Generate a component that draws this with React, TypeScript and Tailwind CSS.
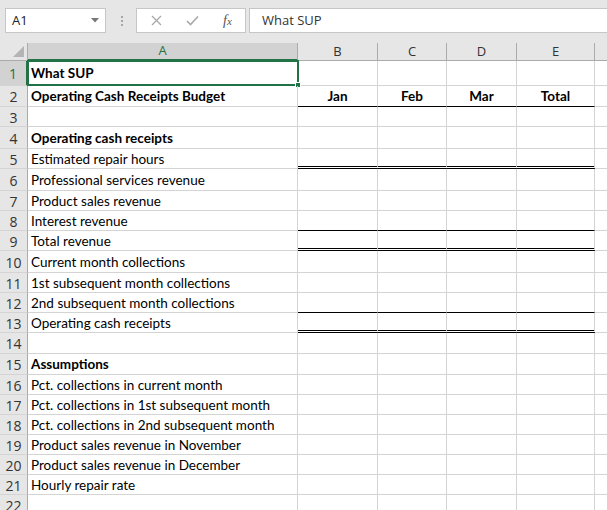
import React from 'react';

type Row = {
  h: number;
  a?: string;
  bold?: boolean;
  months?: boolean;
  line?: 'single' | 'double';
};

const rows: Row[] = [
  { h: 25, a: 'What SUP', bold: true },
  { h: 21, a: 'Operating Cash Receipts Budget', bold: true, months: true, line: 'single' },
  { h: 20 },
  { h: 22, a: 'Operating cash receipts', bold: true },
  { h: 20, a: 'Estimated repair hours', line: 'double' },
  { h: 22, a: 'Professional services revenue' },
  { h: 20, a: 'Product sales revenue' },
  { h: 20, a: 'Interest revenue', line: 'single' },
  { h: 20, a: 'Total revenue', line: 'double' },
  { h: 22, a: 'Current month collections' },
  { h: 20, a: '1st subsequent month collections' },
  { h: 20, a: '2nd subsequent month collections', line: 'single' },
  { h: 20, a: 'Operating cash receipts', line: 'double' },
  { h: 21 },
  { h: 21, a: 'Assumptions', bold: true },
  { h: 20, a: 'Pct. collections in current month' },
  { h: 20, a: 'Pct. collections in 1st subsequent month' },
  { h: 20, a: 'Pct. collections in 2nd subsequent month' },
  { h: 20, a: 'Product sales revenue in November' },
  { h: 20, a: 'Product sales revenue in December' },
  { h: 20, a: 'Hourly repair rate' },
  { h: 20 },
];

const months = ['Jan', 'Feb', 'Mar', 'Total'];
const cols = ['B', 'C', 'D', 'E'];
const cellFont = { fontFamily: '"Comic Sans MS", Lato, "Noto Sans", sans-serif' };
const uiFont = { fontFamily: '"Open Sans", "Liberation Sans", sans-serif' };

function colWidth(i: number) {
  return i === 0 ? 'w-[80px]' : i === 1 ? 'w-[69px]' : i === 2 ? 'w-[70px]' : 'w-[78px]';
}

function Toolbar() {
  return (
    <div className="flex h-[43px] items-start bg-[#e6e6e6] pt-[8px] pl-[5px]" style={uiFont}>
      <div className="flex h-[25px] w-[101px] items-center justify-between border border-[#c6c6c6] bg-white pl-[6px] pr-[6px] text-[13px] text-[#222]">
        <span>A1</span>
        <svg width="8" height="5" viewBox="0 0 8 5">
          <path d="M0 0 L8 0 L4 4.5 Z" fill="#777" />
        </svg>
      </div>
      <div className="ml-[15px] mr-[13px] flex h-[25px] flex-col justify-center gap-[2px]">
        <span className="h-[2px] w-[2px] bg-[#a6a6a6]" />
        <span className="h-[2px] w-[2px] bg-[#a6a6a6]" />
        <span className="h-[2px] w-[2px] bg-[#a6a6a6]" />
      </div>
      <div className="flex h-[25px] w-[110px] items-center border border-[#c6c6c6] bg-white">
        <svg className="ml-[14px]" width="11" height="11" viewBox="0 0 11 11">
          <path d="M1 1 L10 10 M10 1 L1 10" stroke="#a8a8a8" strokeWidth="1.3" />
        </svg>
        <svg className="ml-[24px]" width="13" height="11" viewBox="0 0 13 11">
          <path d="M1 6 L4.5 9.5 L12 1.5" stroke="#a8a8a8" strokeWidth="1.6" fill="none" />
        </svg>
        <span
          className="ml-[24px] text-[14px] italic text-[#555]"
          style={{ fontFamily: '"Liberation Serif", serif' }}
        >
          f<span className="text-[11px]">x</span>
        </span>
      </div>
      <div className="ml-[3px] flex h-[25px] flex-1 items-center border border-r-0 border-[#c6c6c6] bg-white pl-[12px] text-[13px] text-[#333]">
        What SUP
      </div>
    </div>
  );
}

function HeaderRow() {
  return (
    <div className="flex h-[18px] bg-[#e6e6e6] text-[13px] text-[#333]" style={uiFont}>
      <div className="relative w-[28px] shrink-0 border-r border-b border-[#ababab]">
        <svg className="absolute right-[3px] bottom-[3px]" width="11" height="11" viewBox="0 0 11 11">
          <path d="M11 0 L11 11 L0 11 Z" fill="#b4b4b4" />
        </svg>
      </div>
      <div className="flex w-[270px] shrink-0 items-center justify-center border-r border-[#ababab] border-b-2 border-b-[#217346] bg-[#d2d2d2] text-[#217346]">
        A
      </div>
      {cols.map((c, i) => (
        <div
          key={c}
          className={`flex shrink-0 items-center justify-center border-r border-b border-[#ababab] ${colWidth(i)}`}
        >
          {c}
        </div>
      ))}
      <div className="flex-1 border-b border-[#ababab]" />
    </div>
  );
}

function lineClass(line?: 'single' | 'double') {
  if (line === 'double') return 'border-b-[3px] border-b-black border-double';
  if (line === 'single') return 'border-b border-b-black';
  return 'border-b border-b-[#d4d4d4]';
}

function GridRow({ row, n }: { row: Row; n: number }) {
  const selected = n === 1;
  return (
    <div className="flex" style={{ height: row.h }}>
      <div
        className={`flex w-[28px] shrink-0 items-center justify-center border-b border-b-[#d4d4d4] pt-[1px] text-[14px] ${
          selected
            ? 'border-r-2 border-r-[#217346] bg-[#d2d2d2] text-[#217346]'
            : 'border-r border-r-[#ababab] bg-[#e6e6e6] text-[#333]'
        }`}
        style={uiFont}
      >
        {n}
      </div>
      <div
        className={`relative flex w-[270px] shrink-0 items-center border-r border-r-[#d4d4d4] border-b border-b-[#d4d4d4] pt-[1px] pl-[3px] text-[13.5px] text-black ${
          row.bold ? 'font-bold' : ''
        }`}
        style={cellFont}
      >
        {row.a}
        {selected && (
          <div className="pointer-events-none absolute -top-[1px] -left-[1px] -right-[2px] -bottom-[1px] border-2 border-[#217346]">
            <span className="absolute -right-[4px] -bottom-[4px] h-[6px] w-[6px] border border-white bg-[#217346]" />
          </div>
        )}
      </div>
      {cols.map((c, i) => (
        <div
          key={c}
          className={`flex shrink-0 items-center justify-center border-r border-r-[#d4d4d4] pt-[1px] text-[13.5px] font-bold text-black ${lineClass(
            row.line
          )} ${colWidth(i)}`}
          style={cellFont}
        >
          {row.months ? months[i] : ''}
        </div>
      ))}
      <div className="flex-1 border-b border-b-[#d4d4d4]" />
    </div>
  );
}

export default function App() {
  return (
    <div className="h-[510px] w-[607px] overflow-hidden bg-white">
      <Toolbar />
      <HeaderRow />
      {rows.map((r, i) => (
        <GridRow key={i} row={r} n={i + 1} />
      ))}
    </div>
  );
}
